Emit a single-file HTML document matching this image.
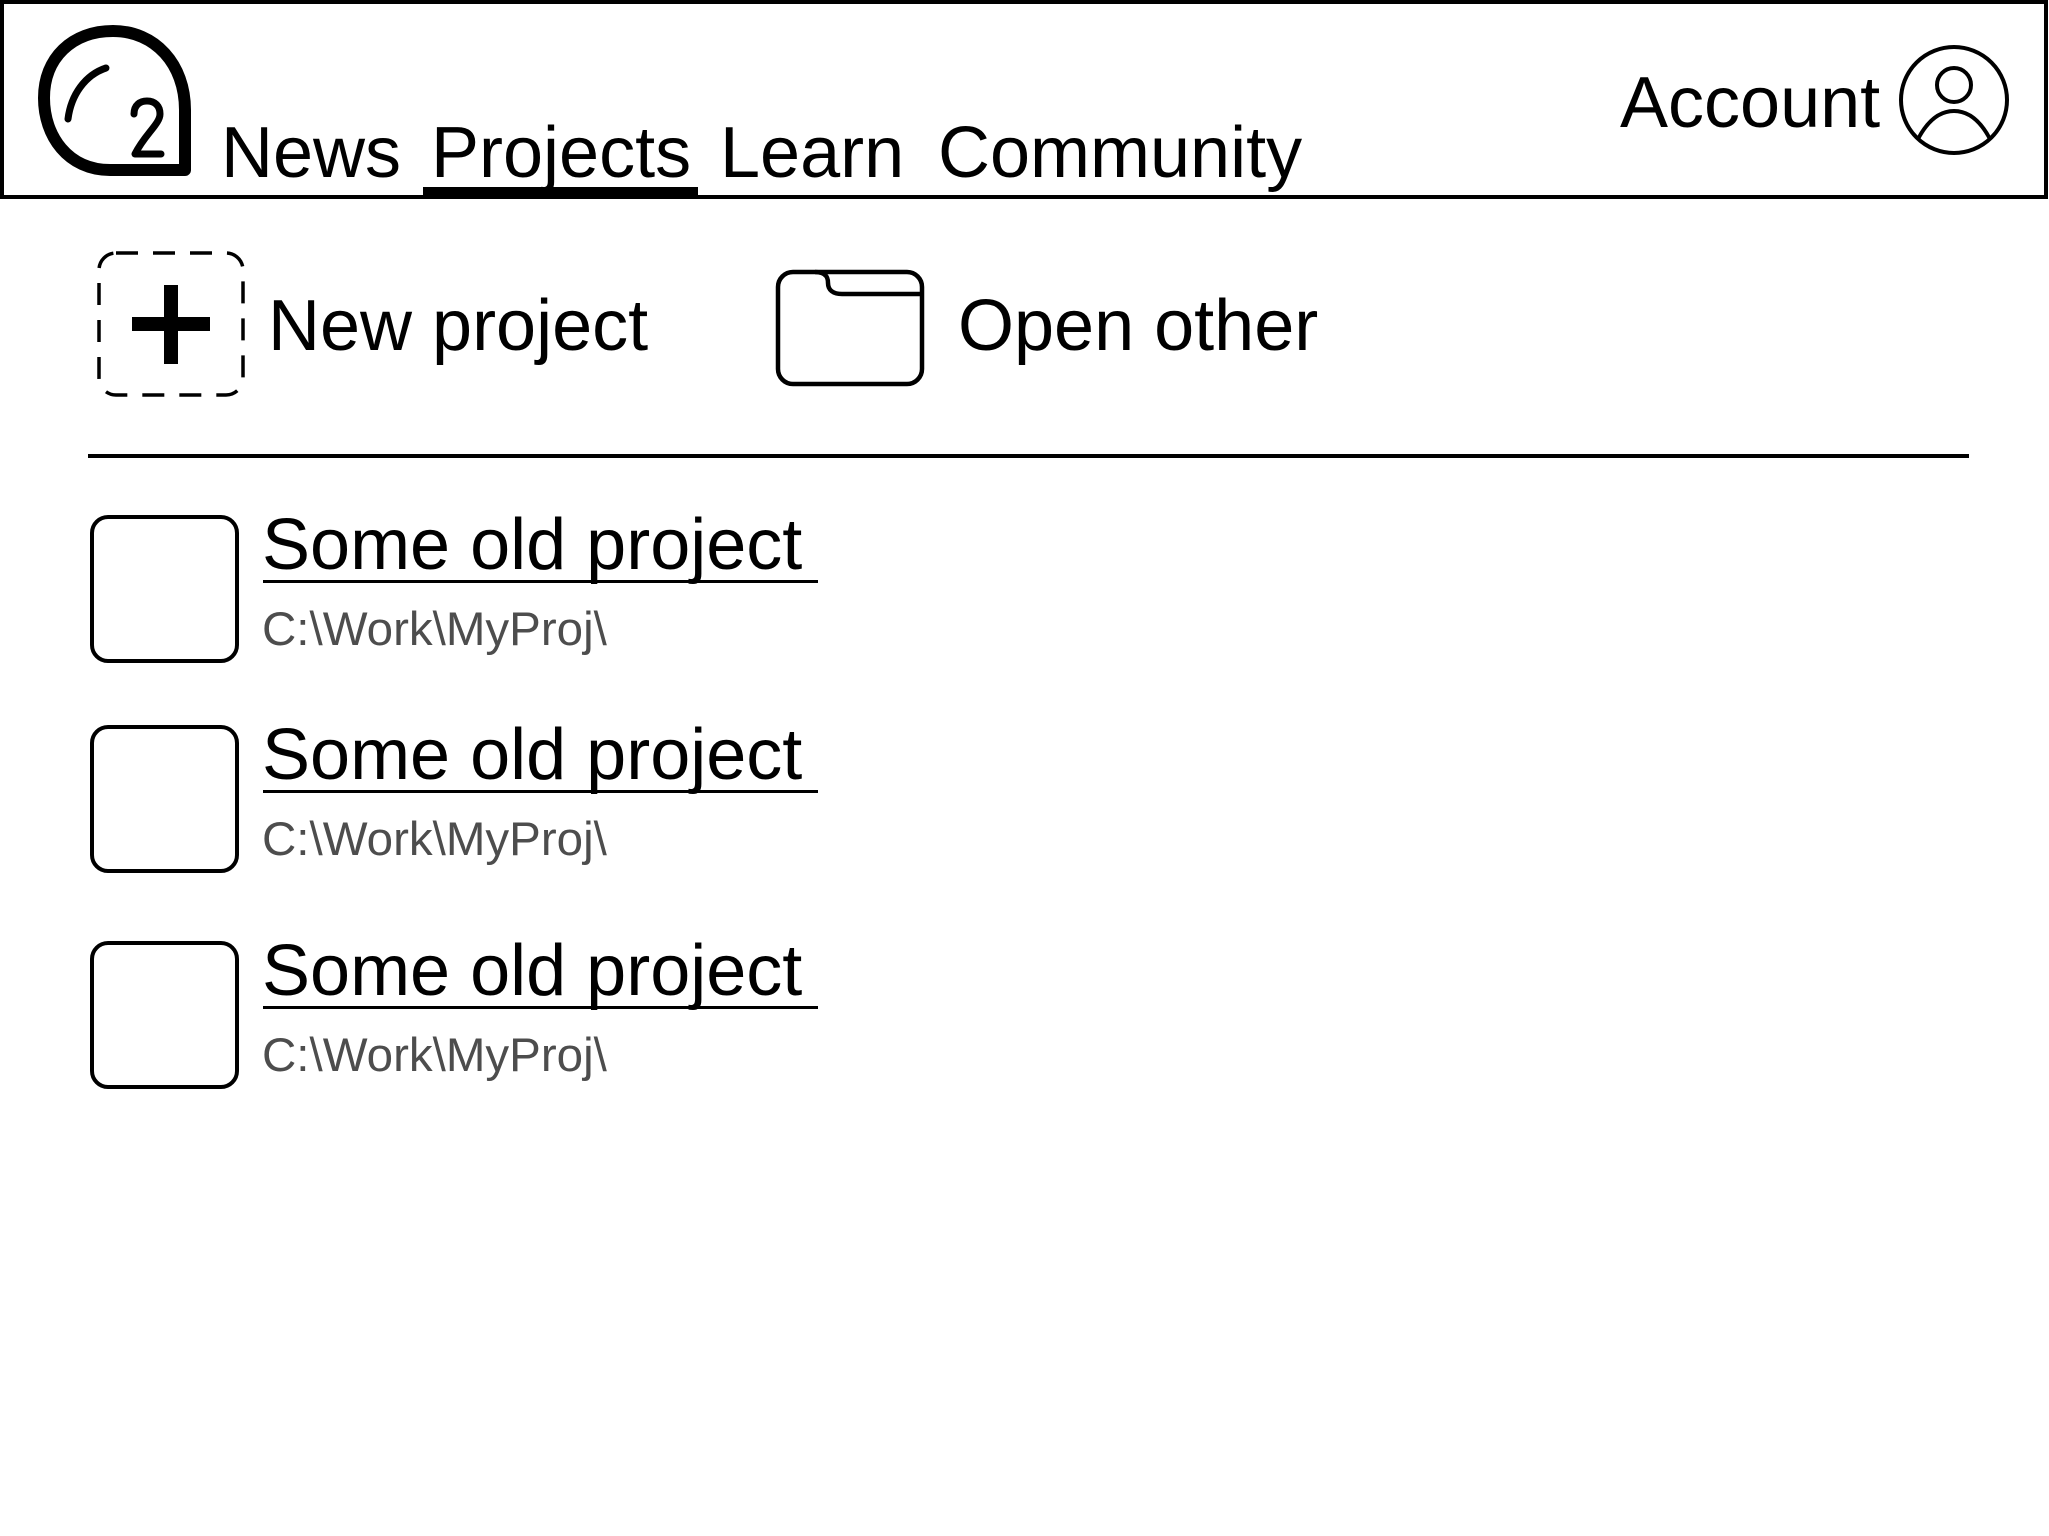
<!DOCTYPE html>
<html><head><meta charset="utf-8"><style>
html,body{margin:0;padding:0;background:#fff;}
svg{display:block;}
text{font-family:"Liberation Sans",Arial,sans-serif;}
</style></head><body>
<svg width="2049" height="1536" viewBox="0 0 2049 1536" xmlns="http://www.w3.org/2000/svg">
<rect x="0" y="0" width="2049" height="1536" fill="#fff"/>
<!-- header -->
<rect x="2" y="2" width="2044" height="195" fill="none" stroke="#000" stroke-width="4"/>
<!-- logo -->
<path d="M185 170 H110 C68 170 44 136 44 98 C44 58 72 31 113 31 C155 31 185 64 185 110 Z" fill="none" stroke="#000" stroke-width="12" stroke-linejoin="round"/>
<path d="M68 119 C71 95 85 75 106 68" fill="none" stroke="#000" stroke-width="7" stroke-linecap="round"/>
<path d="M134 114 C134 105 140 101 147 101 C155 101 160 106 160 114 C160 124 145 134 135 154 H161" fill="none" stroke="#000" stroke-width="7" stroke-linecap="round" stroke-linejoin="round"/>
<!-- nav -->
<g font-size="72" fill="#000">
<text x="221" y="177">News</text>
<text x="431" y="177">Projects</text>
<text x="720" y="177">Learn</text>
<text x="938" y="177">Community</text>
<text x="1620" y="127">Account</text>
</g>
<rect x="423" y="187" width="275" height="9" fill="#000"/>
<!-- user icon -->
<g fill="none" stroke="#000" stroke-width="4">
<circle cx="1954" cy="100" r="53"/>
<circle cx="1954" cy="85" r="17"/>
<path d="M1918 139 C1928 120 1940 111 1954 111 C1968 111 1980 120 1990 139"/>
</g>
<!-- new project -->
<rect x="99" y="253" width="144" height="142" rx="17" fill="none" stroke="#000" stroke-width="3.5" stroke-dasharray="22 15"/>
<rect x="132" y="317" width="78" height="14" fill="#000"/>
<rect x="164" y="285" width="14" height="79" fill="#000"/>
<text x="268" y="350" font-size="72">New project</text>
<!-- folder -->
<g fill="none" stroke="#000" stroke-width="4.5">
<rect x="778" y="272" width="144" height="112" rx="15"/>
<path d="M815 272 C828 272 828 280 828 283 C828 290 833 294 842 294 H922"/>
</g>
<text x="958" y="350" font-size="72">Open other</text>
<!-- divider -->
<rect x="88" y="454" width="1881" height="4" fill="#000"/>
<!-- items -->
<g fill="none" stroke="#000" stroke-width="4">
<rect x="92" y="517" width="145" height="144" rx="16"/>
<rect x="92" y="727" width="145" height="144" rx="16"/>
<rect x="92" y="943" width="145" height="144" rx="16"/>
</g>
<g font-size="72" fill="#000">
<text x="262" y="569">Some old project</text>
<text x="262" y="779">Some old project</text>
<text x="262" y="995">Some old project</text>
</g>
<rect x="263" y="580" width="555" height="3" fill="#000"/>
<rect x="263" y="790" width="555" height="3" fill="#000"/>
<rect x="263" y="1006" width="555" height="3" fill="#000"/>
<g font-size="47.5" fill="#4d4d4d">
<text x="262" y="645">C:\Work\MyProj\</text>
<text x="262" y="855">C:\Work\MyProj\</text>
<text x="262" y="1071">C:\Work\MyProj\</text>
</g>
</svg>
</body></html>
